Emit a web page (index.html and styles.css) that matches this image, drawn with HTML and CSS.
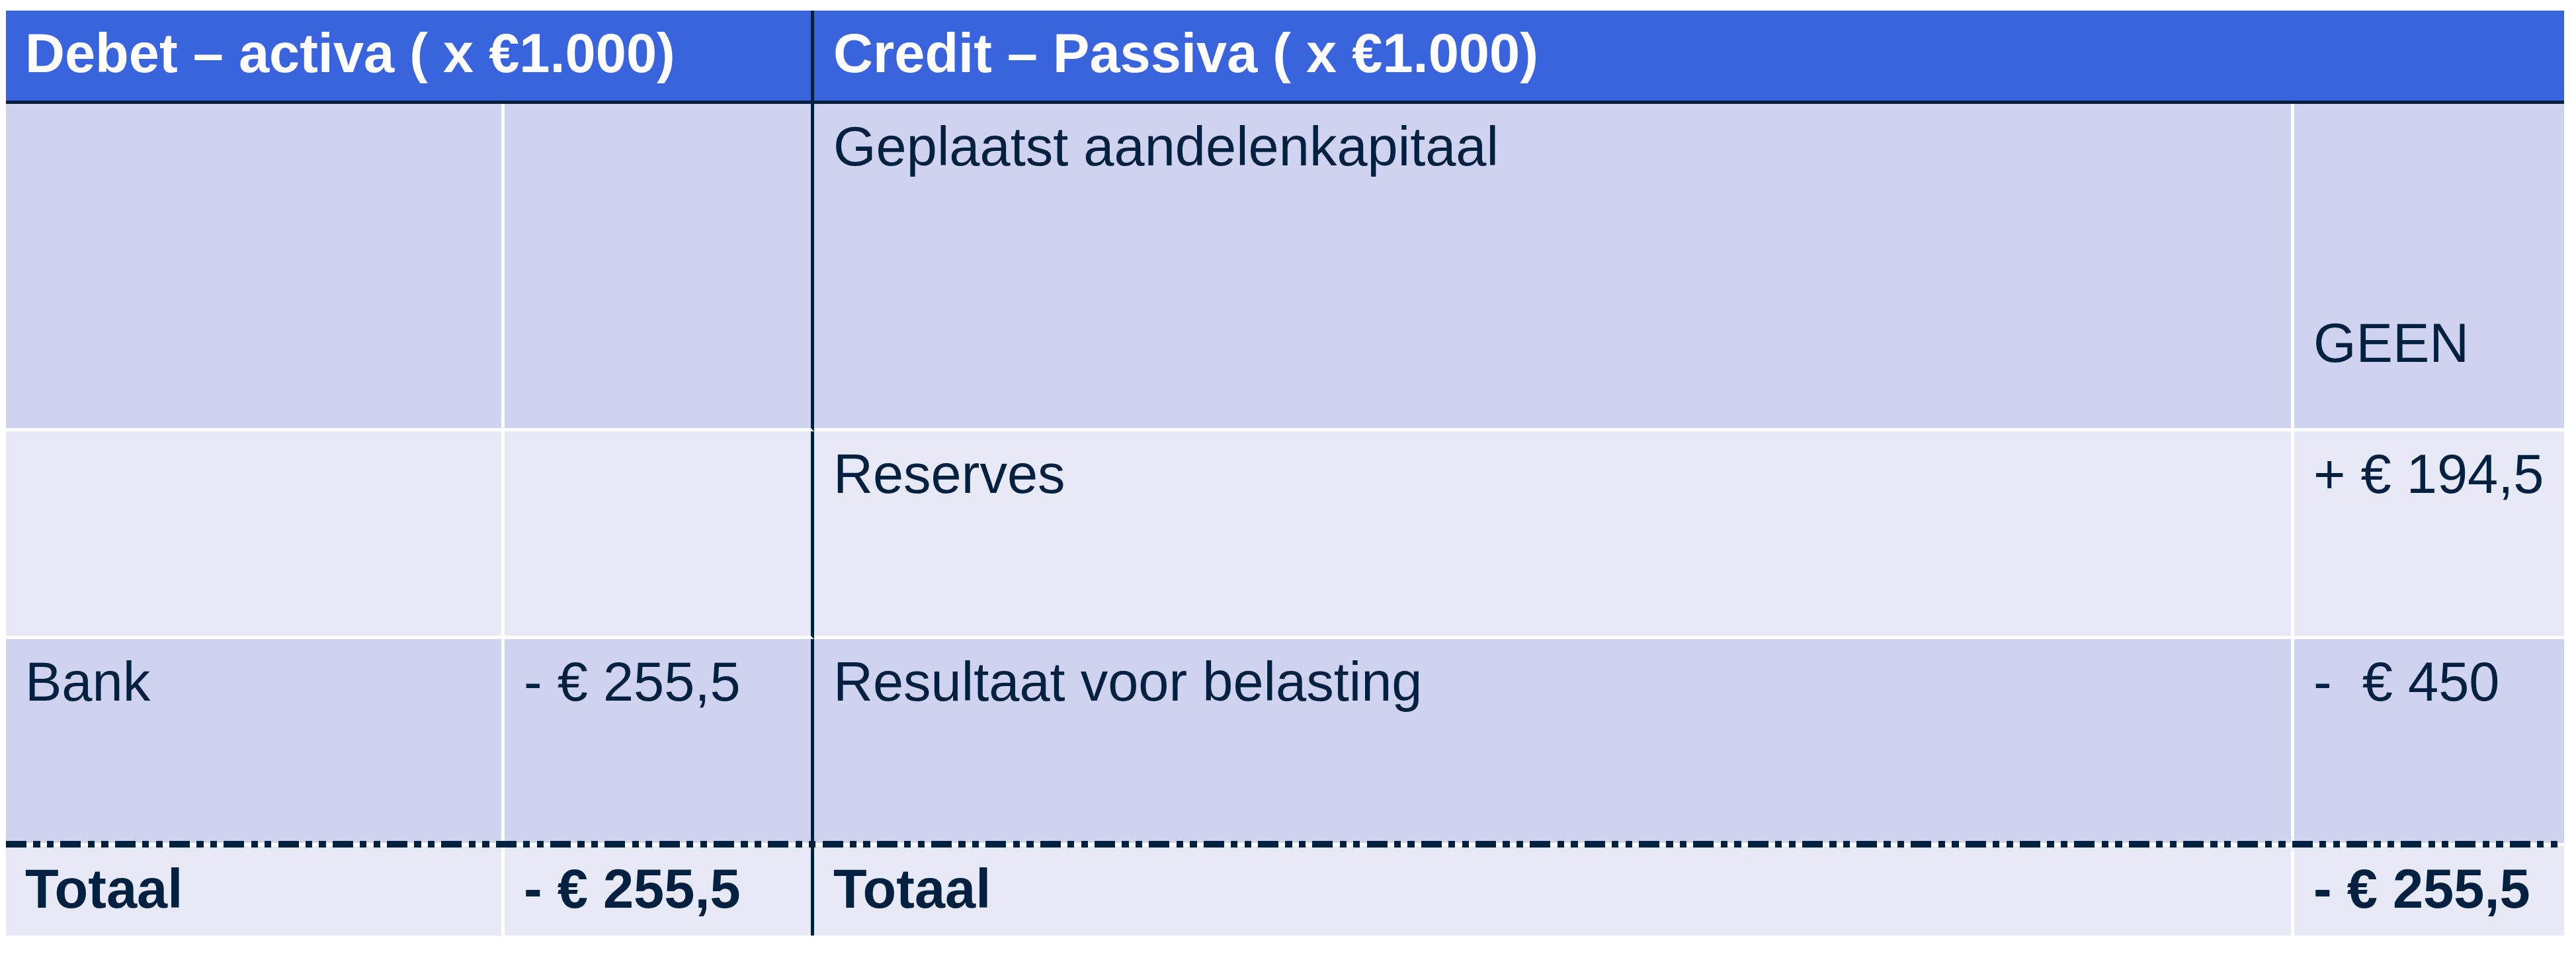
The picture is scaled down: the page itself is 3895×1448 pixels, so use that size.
FILE: index.html
```html
<!DOCTYPE html>
<html lang="nl">
<head>
<meta charset="utf-8">
<title>Balans</title>
<link rel="stylesheet" href="styles.css">
</head>
<body>
<div class="page">
  <div class="balance">
    <div class="cell head head-left">Debet – activa ( x €1.000)</div>
    <div class="cell head head-right">Credit – Passiva ( x €1.000)</div>

    <div class="cell band-a row c1"></div>
    <div class="cell band-a row c2"></div>
    <div class="cell band-a row c3">Geplaatst aandelenkapitaal</div>
    <div class="cell band-a row c4"><br><br><br>GEEN</div>

    <div class="cell band-b row c1"></div>
    <div class="cell band-b row c2"></div>
    <div class="cell band-b row c3">Reserves</div>
    <div class="cell band-b row c4 num">+ € 194,5</div>

    <div class="cell band-a row c1">Bank</div>
    <div class="cell band-a row c2 num">- € 255,5</div>
    <div class="cell band-a row c3">Resultaat voor belasting</div>
    <div class="cell band-a row c4 num">-  € 450</div>

    <div class="cell band-b total c1">Totaal</div>
    <div class="cell band-b total c2 num">- € 255,5</div>
    <div class="cell band-b total c3">Totaal</div>
    <div class="cell band-b total c4 num">- € 255,5</div>

    <div class="dotline"></div>
  </div>
</div>
</body>
</html>
```

FILE: styles.css
```css
* {
  box-sizing: border-box;
}

html,
body {
  margin: 0;
  background: #ffffff;
}

body {
  font-family: "Liberation Sans", Arial, sans-serif;
  color: #02203f;
}

.page {
  padding: 16px 0 0 9px;
}

.balance {
  display: grid;
  width: 3868px;
  grid-template-columns: 754px 468px 2238px 408px;
  grid-template-rows: 141px 495px 314px 313px 135px;
}

.cell {
  font-size: 83px;
  line-height: 99px;
  padding: 15px 29px 0 29px;
  white-space: nowrap;
}

.num {
  white-space: pre;
}

.head {
  background: #3a64dd;
  color: #ffffff;
  font-weight: bold;
  border-bottom: 5px solid #02203f;
}

.head-left {
  grid-column: 1 / 3;
  border-right: 5px solid #02203f;
}

.head-right {
  grid-column: 3 / 5;
}

.band-a {
  background: #cfd3f0;
}

.band-b {
  background: #e7e9f7;
}

.row {
  border-bottom: 5px solid #ffffff;
}

.c1 {
  border-right: 5px solid #ffffff;
}

.c2 {
  border-right: 5px solid #02203f;
}

.c3 {
  border-right: 5px solid #ffffff;
}

.total {
  grid-row: 5;
  font-weight: bold;
}

.total.c1 {
  grid-column: 1;
}

.total.c2 {
  grid-column: 2;
}

.total.c3 {
  grid-column: 3;
}

.total.c4 {
  grid-column: 4;
}

.dotline {
  grid-row: 5;
  grid-column: 1 / -1;
  align-self: start;
  height: 10px;
  margin-top: -8px;
  z-index: 1;
  background-image: repeating-linear-gradient(
    to right,
    #02203f 0px,
    #02203f 31px,
    transparent 31px,
    transparent 41.3px,
    #02203f 41.3px,
    #02203f 51.6px,
    transparent 51.6px,
    transparent 61.9px,
    #02203f 61.9px,
    #02203f 72.2px,
    transparent 72.2px,
    transparent 82.3px
  );
}
```
